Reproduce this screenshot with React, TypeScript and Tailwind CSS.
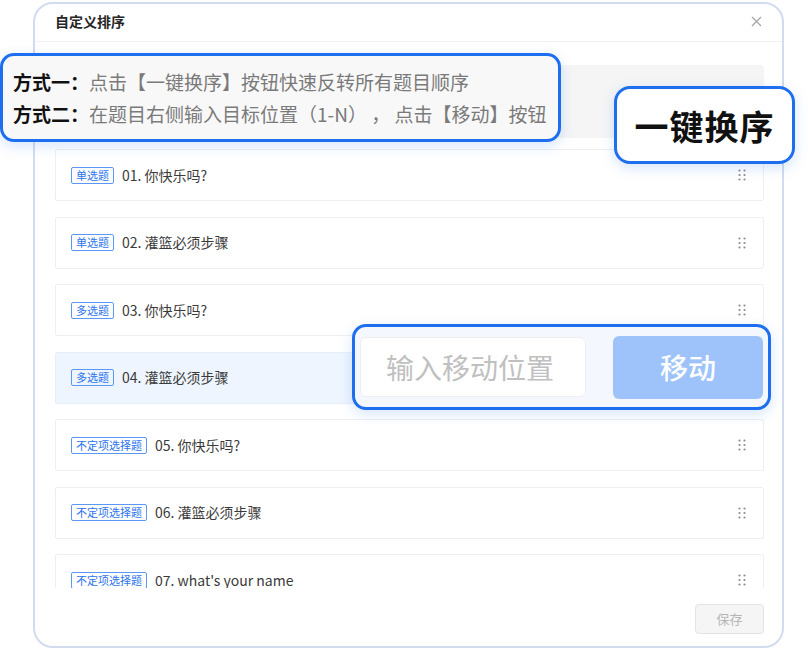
import React from "react"

type Item = { tag: string; title: string; active?: boolean }

const items: Item[] = [
  { tag: "单选题", title: "01. 你快乐吗?" },
  { tag: "单选题", title: "02. 灌篮必须步骤" },
  { tag: "多选题", title: "03. 你快乐吗?" },
  { tag: "多选题", title: "04. 灌篮必须步骤", active: true },
  { tag: "不定项选择题", title: "05. 你快乐吗?" },
  { tag: "不定项选择题", title: "06. 灌篮必须步骤" },
  { tag: "不定项选择题", title: "07. what's your name" },
]

function DragHandle() {
  return (
    <svg width="8" height="12" viewBox="0 0 8 12" fill="#8c8c8c">
      <circle cx="1.5" cy="1.5" r="1.1" />
      <circle cx="6.5" cy="1.5" r="1.1" />
      <circle cx="1.5" cy="6" r="1.1" />
      <circle cx="6.5" cy="6" r="1.1" />
      <circle cx="1.5" cy="10.5" r="1.1" />
      <circle cx="6.5" cy="10.5" r="1.1" />
    </svg>
  )
}

export default function App() {
  return (
    <div
      className="relative w-[808px] h-[651px] bg-white overflow-hidden"
      style={{ fontFamily: '"Noto Sans CJK SC", "Noto Sans", sans-serif' }}
    >
      {/* Modal */}
      <div className="ml-[33px] mt-[2px] w-[751px] h-[646px] bg-white border-2 border-[#d3dbef] rounded-[20px] flex flex-col overflow-hidden">
        <div className="h-[38px] shrink-0 pl-[20px] pr-[18px] pb-[3px] flex items-center justify-between border-b border-[#f0f0f0]">
          <span className="text-[14px] font-bold text-[#262626]">自定义排序</span>
          <svg width="11" height="11" viewBox="0 0 11 11" stroke="#a6a6a6" strokeWidth="1.3" className="mr-[2px]">
            <path d="M1 1L10 10M10 1L1 10" />
          </svg>
        </div>

        <div className="flex-1 pl-[20px] pr-[18px] pt-[23px] flex flex-col">
          <div className="h-[73px] shrink-0 bg-[#f5f5f5] rounded-[4px]" />

          <div className="mt-[11px] h-[439px] overflow-hidden flex flex-col gap-[15.5px]">
            {items.map((it, i) => (
              <div
                key={i}
                className={`h-[52px] shrink-0 flex items-center pl-[15px] pr-[17px] border rounded-[2px] ${
                  it.active ? "bg-[#eef5fe] border-[#e6eefa]" : "bg-white border-[#efefef]"
                }`}
              >
                <span className="text-[11px] leading-[15px] px-[4px] border border-[#5b97f5] text-[#2b74ee] rounded-[2px]">
                  {it.tag}
                </span>
                <span className="ml-[8px] text-[14px] text-[#3a3a3a]">{it.title}</span>
                <span className="ml-auto flex">
                  <DragHandle />
                </span>
              </div>
            ))}
          </div>

          <div className="mt-[16px] flex justify-end">
            <button className="w-[69px] h-[30px] bg-[#f5f5f5] border border-[#e3e3e3] rounded-[4px] text-[13px] text-[#b5b5b5]">
              保存
            </button>
          </div>
        </div>
      </div>

      {/* Callout: instructions */}
      <div className="absolute left-0 top-[53px] w-[561px] h-[89px] bg-[#f8f8f8] border-[3px] border-[#1e6ff0] rounded-[14px] shadow-[0_4px_14px_rgba(30,111,240,0.18)] pl-[10px] flex flex-col justify-center gap-[5px] text-[19px] leading-[27px]">
        <div>
          <span className="font-bold text-[#111]">方式一：</span>
          <span className="text-[#7a7a7a]">点击【一键换序】按钮快速反转所有题目顺序</span>
        </div>
        <div>
          <span className="font-bold text-[#111]">方式二：</span>
          <span className="text-[#7a7a7a]">在题目右侧输入目标位置（1-N）&nbsp;，&nbsp;点击【移动】按钮</span>
        </div>
      </div>

      {/* Callout: one-key reorder */}
      <div className="absolute left-[614px] top-[86px] w-[181px] h-[78px] bg-white border-[3px] border-[#1e6ff0] rounded-[16px] shadow-[0_4px_14px_rgba(30,111,240,0.18)] flex items-center justify-center">
        <span className="text-[34px] font-bold text-[#111] tracking-[1px]">一键换序</span>
      </div>

      {/* Callout: move input */}
      <div className="absolute left-[352px] top-[324px] w-[419px] h-[86px] bg-[#f4f8fe] border-[3px] border-[#1e6ff0] rounded-[14px] shadow-[0_4px_14px_rgba(30,111,240,0.18)] flex items-center pl-[5px] pr-[5px]">
        <div className="w-[226px] h-[60px] bg-white border border-[#eeeeee] rounded-[6px] flex items-center pl-[25px] text-[28px] text-[#c0c0c0]">
          输入移动位置
        </div>
        <div className="ml-auto w-[150px] h-[63px] bg-[#9ec3fb] rounded-[6px] flex items-center justify-center text-[28px] font-medium text-white">
          移动
        </div>
      </div>
    </div>
  )
}
